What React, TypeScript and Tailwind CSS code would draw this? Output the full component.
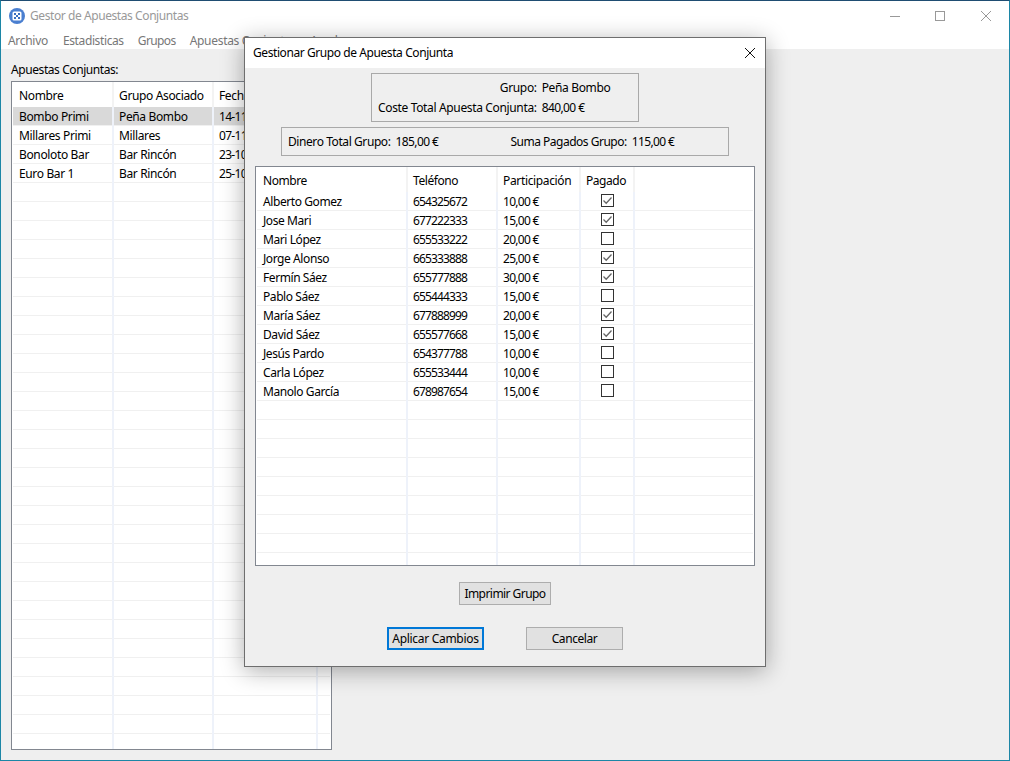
const leftRows = [
  ["Bombo Primi", "Peña Bombo", "14-11-2019"],
  ["Millares Primi", "Millares", "07-11-2019"],
  ["Bonoloto Bar", "Bar Rincón", "23-10-2019"],
  ["Euro Bar 1", "Bar Rincón", "25-10-2019"],
];

const people: [string, string, string, boolean][] = [
  ["Alberto Gomez", "654325672", "10,00 €", true],
  ["Jose Mari", "677222333", "15,00 €", true],
  ["Mari López", "655533222", "20,00 €", false],
  ["Jorge Alonso", "665333888", "25,00 €", true],
  ["Fermín Sáez", "655777888", "30,00 €", true],
  ["Pablo Sáez", "655444333", "15,00 €", false],
  ["María Sáez", "677888999", "20,00 €", true],
  ["David Sáez", "655577668", "15,00 €", true],
  ["Jesús Pardo", "654377788", "10,00 €", false],
  ["Carla López", "655533444", "10,00 €", false],
  ["Manolo García", "678987654", "15,00 €", false],
];

function LeftRow({ cells, selected }: { cells: string[]; selected?: boolean }) {
  const bg = selected ? "bg-[#d9d9d9]" : "";
  return (
    <div className="flex h-[19px] shrink-0">
      <div className="w-[101px] shrink-0 border-r-2 border-r-[#eef2fa]"><div className={`h-[18px] pl-[6px] leading-[20px] tracking-[-0.36px] whitespace-nowrap ${bg}`}>{cells[0]}</div><div className="h-px bg-[#f0f0f0]" /></div>
      <div className="w-[100px] shrink-0 border-r-2 border-r-[#eef2fa]"><div className={`h-[18px] pl-[5px] leading-[20px] tracking-[-0.36px] whitespace-nowrap ${bg}`}>{cells[1]}</div><div className="h-px bg-[#f0f0f0]" /></div>
      <div className="w-[104px] shrink-0 border-r-2 border-r-[#eef2fa]"><div className={`h-[18px] pl-[5px] leading-[20px] whitespace-nowrap tracking-[-0.7px] ${bg}`}>{cells[2]}</div><div className="h-px bg-[#f0f0f0]" /></div>
      <div className="flex-1"><div className={`h-[18px] ${bg}`} /><div className="h-px bg-[#f0f0f0]" /></div>
    </div>
  );
}

function Check({ on }: { on: boolean }) {
  return (
    <svg width="13" height="13" viewBox="0 0 13 13" className="block">
      <rect x="0.5" y="0.5" width="12" height="12" fill="#fff" stroke="#333" />
      {on && <path d="M2.5 6.5 L5.2 9.2 L10.5 3.5" fill="none" stroke="#666" strokeWidth="1.3" />}
    </svg>
  );
}

function RightRow({ p }: { p?: [string, string, string, boolean] }) {
  return (
    <div className="flex h-[19px] shrink-0">
      <div className="w-[151px] shrink-0 border-r-2 border-r-[#eef2fa]"><div className="h-[18px] pl-[6px] leading-[20px] whitespace-nowrap">{p?.[0]}</div><div className="h-px bg-[#f0f0f0]" /></div>
      <div className="w-[90px] shrink-0 border-r-2 border-r-[#eef2fa]"><div className="h-[18px] pl-[5px] leading-[20px] whitespace-nowrap tracking-[-0.85px]">{p?.[1]}</div><div className="h-px bg-[#f0f0f0]" /></div>
      <div className="w-[83px] shrink-0 border-r-2 border-r-[#eef2fa]"><div className="h-[18px] pl-[5px] leading-[20px] whitespace-nowrap tracking-[-0.7px]">{p?.[2]}</div><div className="h-px bg-[#f0f0f0]" /></div>
      <div className="w-[54px] shrink-0 border-r-2 border-r-[#eef2fa]"><div className="flex h-[18px] justify-center pl-px pt-[2px]">{p && <Check on={p[3]} />}</div><div className="h-px bg-[#f0f0f0]" /></div>
      <div className="flex-1"><div className="h-[18px]" /><div className="h-px bg-[#f0f0f0]" /></div>
    </div>
  );
}

export default function App() {
  return (
    <div className="relative h-[761px] w-[1010px] overflow-hidden border-x border-b border-x-[#1c86a6] border-b-[#1c86a6] border-t border-t-[#1f4d72] bg-[#efefef] font-['Noto_Sans','Open_Sans',sans-serif] text-[12px] tracking-[-0.42px] text-black">
      {/* title bar */}
      <div className="flex h-[29px] items-center bg-white">
        <svg width="16" height="16" viewBox="0 0 16 16" className="ml-2 shrink-0">
          <circle cx="8" cy="8" r="8" fill="#4a7fd0" />
          <rect x="3.5" y="3.5" width="9" height="9" rx="1.5" fill="#fff" />
          <rect x="5" y="5" width="2" height="2" fill="#3a6fc0" />
          <rect x="9" y="5" width="2" height="2" fill="#3a6fc0" />
          <rect x="7" y="7" width="2" height="2" fill="#3a6fc0" />
          <rect x="5" y="9" width="2" height="2" fill="#3a6fc0" />
          <rect x="9" y="9" width="2" height="2" fill="#3a6fc0" />
        </svg>
        <span className="ml-[5px] text-[#999]">Gestor de Apuestas Conjuntas</span>
        <div className="ml-auto flex items-center">
          <svg width="10" height="10" viewBox="0 0 10 10" className="mr-[35px]"><path d="M0 5.5H10" stroke="#999" /></svg>
          <svg width="10" height="10" viewBox="0 0 10 10" className="mr-[36px]"><rect x="0.5" y="0.5" width="9" height="9" fill="none" stroke="#999" /></svg>
          <svg width="10" height="10" viewBox="0 0 10 10" className="mr-[18px]"><path d="M0 0L10 10M10 0L0 10" stroke="#999" /></svg>
        </div>
      </div>
      {/* menu */}
      <div className="flex h-[19px] items-center bg-white pl-[7px] pt-[3px] tracking-[-0.3px] text-[#777]">
        <span className="mr-[15px]">Archivo</span>
        <span className="mr-[14px] tracking-[-0.38px]">Estadisticas</span>
        <span className="mr-[14px] tracking-[-0.6px]">Grupos</span>
        <span className="mr-[14px]">Apuestas Conjuntas</span>
        <span>Ayuda</span>
      </div>
      {/* main */}
      <div className="px-[10px] pt-[12px]">
        <div className="h-[16px] leading-[18px]">Apuestas Conjuntas:</div>
        <div className="mt-[4px] flex h-[669px] w-[321px] flex-col overflow-hidden border border-[#828790] bg-white px-px pb-px">
          <div className="flex h-[25px] shrink-0 tracking-[-0.36px]">
            <div className="w-[101px] shrink-0 border-r-2 border-r-[#f3f3f3] pl-[6px] leading-[27px]">Nombre</div>
            <div className="w-[100px] shrink-0 border-r-2 border-r-[#f3f3f3] pl-[5px] leading-[27px]">Grupo Asociado</div>
            <div className="w-[104px] shrink-0 border-r-2 border-r-[#f3f3f3] pl-[5px] leading-[27px]">Fecha</div>
          </div>
          {Array.from({ length: 34 }).map((_, i) => (
            <LeftRow key={i} cells={leftRows[i] ?? ["", "", ""]} selected={i === 0} />
          ))}
        </div>
      </div>

      {/* dialog */}
      <div className="absolute left-[243px] top-[36px] flex h-[630px] w-[522px] flex-col items-center border border-[#6e6e6e] bg-[#efefef] shadow-[0_4px_22px_rgba(0,0,0,0.32)]">
        <div className="flex h-[30px] w-full shrink-0 items-center justify-between bg-white pl-[8px] pr-[10px]">
          <span>Gestionar Grupo de Apuesta Conjunta</span>
          <svg width="10" height="10" viewBox="0 0 10 10"><path d="M0 0L10 10M10 0L0 10" stroke="#111" /></svg>
        </div>
        <div className="mt-[5px] grid h-[49px] w-[268px] shrink-0 grid-cols-[auto_1fr] content-center gap-x-[5px] gap-y-[4px] border border-[#a9a9a9] px-[6px] leading-[16px] tracking-[-0.35px]">
          <span className="text-right">Grupo:</span><span>Peña Bombo</span>
          <span>Coste Total Apuesta Conjunta:</span><span className="tracking-[-0.6px]">840,00 €</span>
        </div>
        <div className="mt-[5px] flex h-[29px] w-[448px] shrink-0 items-center border border-[#a9a9a9] pl-[6px]">
          <span>Dinero Total Grupo:</span>
          <span className="ml-[5px] w-[115px] tracking-[-0.6px]">185,00 €</span>
          <span className="tracking-[-0.5px]">Suma Pagados Grupo:</span>
          <span className="ml-[5px] tracking-[-0.6px]">115,00 €</span>
        </div>
        <div className="mt-[10px] flex h-[400px] w-[500px] shrink-0 flex-col overflow-hidden border border-[#828790] bg-white px-px pb-px">
          <div className="flex h-[25px] shrink-0">
            <div className="w-[151px] shrink-0 border-r-2 border-r-[#f3f3f3] pl-[6px] leading-[27px]">Nombre</div>
            <div className="w-[90px] shrink-0 border-r-2 border-r-[#f3f3f3] pl-[5px] leading-[27px]">Teléfono</div>
            <div className="w-[83px] shrink-0 border-r-2 border-r-[#f3f3f3] pl-[5px] leading-[27px] tracking-[-0.35px]">Participación</div>
            <div className="w-[54px] shrink-0 border-r-2 border-r-[#f3f3f3] pr-[2px] text-center leading-[27px]">Pagado</div>
          </div>
          {Array.from({ length: 20 }).map((_, i) => (
            <RightRow key={i} p={people[i]} />
          ))}
        </div>
        <button className="mt-[16px] h-[23px] w-[92px] shrink-0 border border-[#adadad] bg-[#e1e1e1] leading-[21px] tracking-[-0.55px]">Imprimir Grupo</button>
        <div className="mt-[22px] flex shrink-0 gap-[42px]">
          <button className="h-[23px] w-[97px] border-2 border-[#0078d7] bg-[#e1e1e1] leading-[19px] tracking-[-0.3px]">Aplicar Cambios</button>
          <button className="h-[23px] w-[97px] border border-[#adadad] bg-[#e1e1e1] leading-[21px]">Cancelar</button>
        </div>
      </div>
    </div>
  );
}
